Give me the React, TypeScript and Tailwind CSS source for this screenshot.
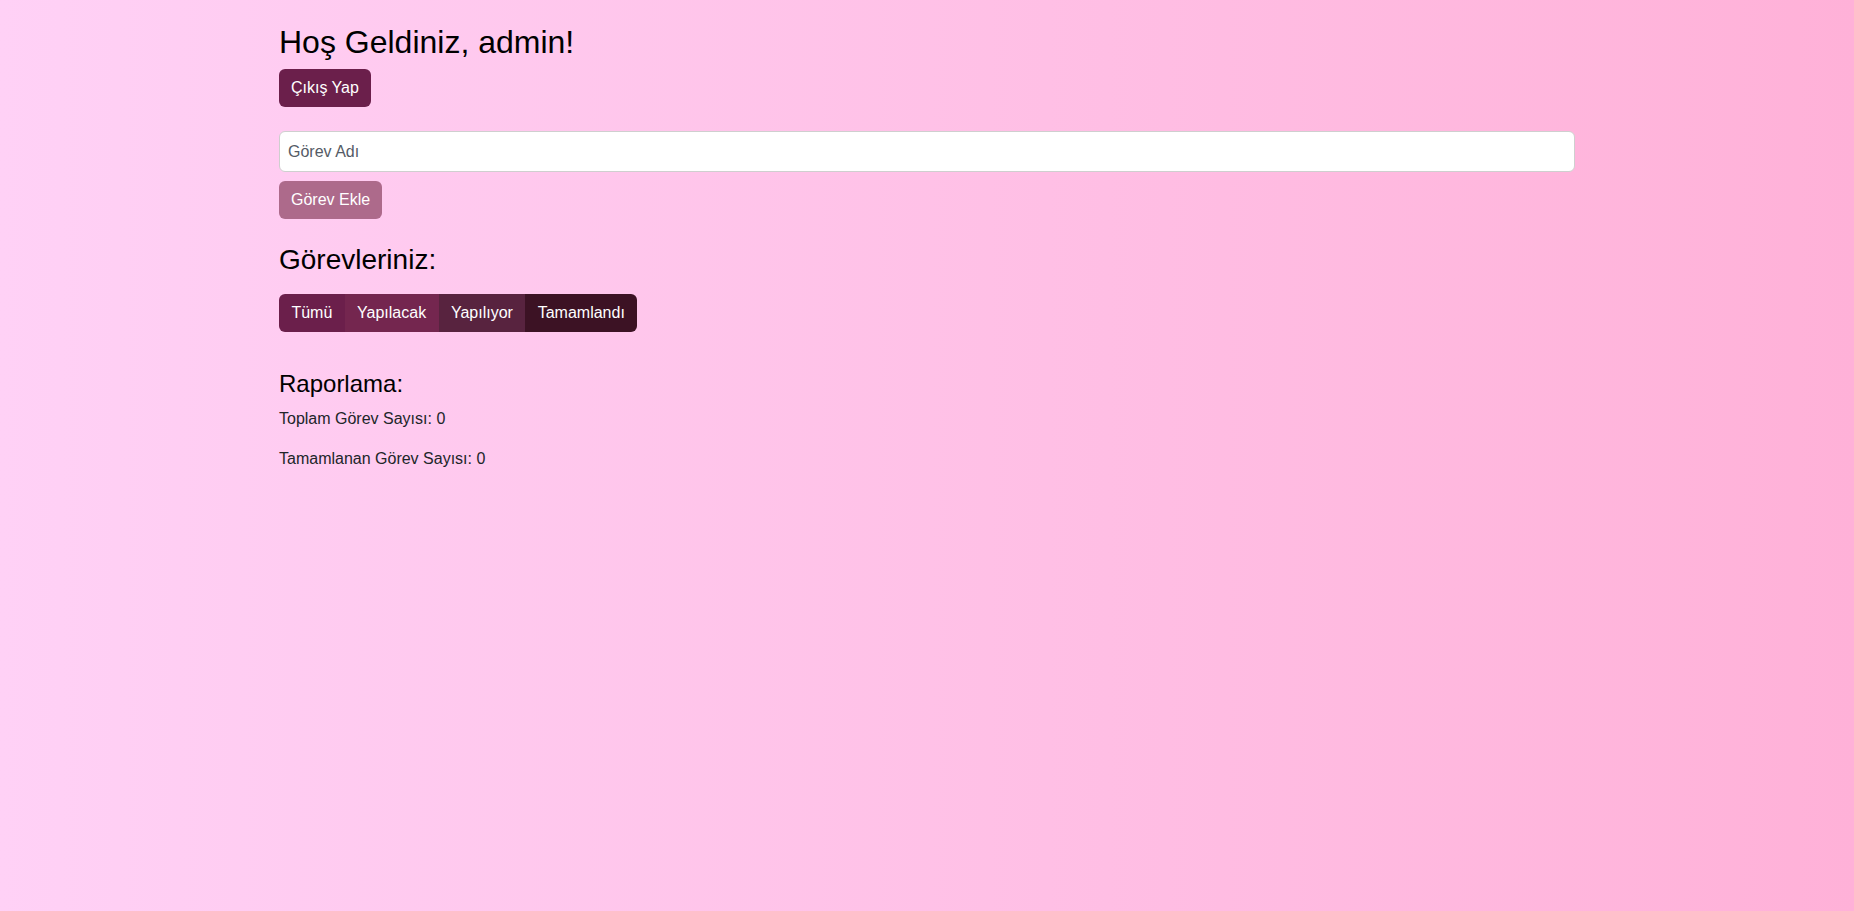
import React, { useState } from "react";

const filters = [
  { key: "all", label: "Tümü", color: "bg-[#6b1f4b]" },
  { key: "todo", label: "Yapılacak", color: "bg-[#74264f]" },
  { key: "doing", label: "Yapılıyor", color: "bg-[#58233f]" },
  { key: "done", label: "Tamamlandı", color: "bg-[#3c1224]" },
];

const App = () => {
  const [taskName, setTaskName] = useState("");
  const [tasks] = useState<{ name: string; status: string }[]>([]);
  const [, setFilter] = useState("all");

  const completed = tasks.filter((t) => t.status === "done").length;

  return (
    <div className="min-h-screen bg-gradient-to-r from-[#ffd1f6] to-[#ffb1d8] font-['Liberation_Sans',Arial,sans-serif] text-[#212529]">
      <div className="w-[1296px] mx-auto pt-[23px]">
        {/* Header */}
        <h2 className="text-[32px] leading-[1.2] mb-2 text-black">Hoş Geldiniz, admin!</h2>
        <button className="h-[38px] px-3 rounded-md bg-[#6b1f4b] text-white text-base">
          Çıkış Yap
        </button>

        {/* New task */}
        <input
          value={taskName}
          onChange={(e) => setTaskName(e.target.value)}
          placeholder="Görev Adı"
          className="block mt-6 w-full h-[41px] px-2 bg-white border border-[#cfcfcf] rounded-md text-base text-[#212529] placeholder:text-[#555b66] outline-none"
        />
        <button
          disabled={!taskName}
          className="mt-[9px] h-[38px] px-3 rounded-md bg-[#ad6a8b] text-white text-base"
        >
          Görev Ekle
        </button>

        {/* Task list */}
        <h3 className="mt-[24px] mb-[17px] text-[28px] leading-[1.2] text-black">Görevleriniz:</h3>
        <div className="inline-flex rounded-md overflow-hidden h-[38px]">
          {filters.map((f) => (
            <button
              key={f.key}
              onClick={() => setFilter(f.key)}
              className={`px-[12.4px] text-white text-base ${f.color}`}
            >
              {f.label}
            </button>
          ))}
        </div>

        {/* Report */}
        <h4 className="mt-[38px] mb-2 text-[24px] leading-[1.2] text-black">Raporlama:</h4>
        <p className="text-base leading-6 mb-4">Toplam Görev Sayısı: {tasks.length}</p>
        <p className="text-base leading-6 mb-4">Tamamlanan Görev Sayısı: {completed}</p>
      </div>
    </div>
  );
};

export default App;
